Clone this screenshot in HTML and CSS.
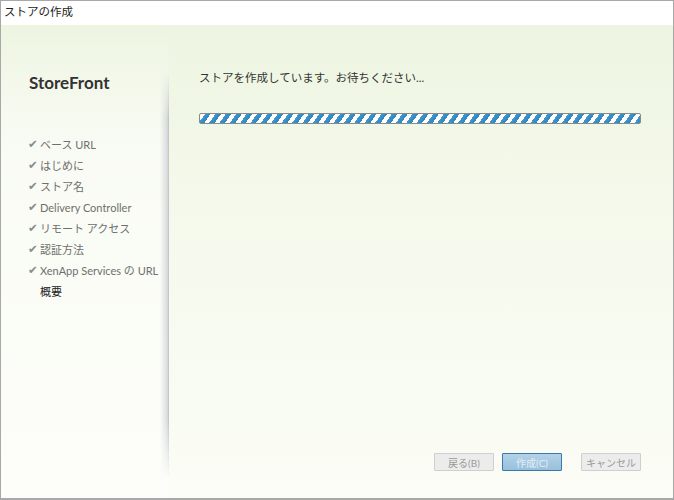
FILE: index.html
```html
<!DOCTYPE html>
<html lang="ja">
<head>
    <meta charset="UTF-8">
    <title>ストアの作成</title>
    <link rel="stylesheet" href="styles.css">
</head>
<body>
    <div class="window">
        <div class="title-bar">ストアの作成</div>
        <div class="wizard">
            <div class="sidebar">
                <h1 class="product">StoreFront</h1>
                <ul class="steps">
                    <li class="done">ベース URL</li>
                    <li class="done">はじめに</li>
                    <li class="done">ストア名</li>
                    <li class="done">Delivery Controller</li>
                    <li class="done">リモート アクセス</li>
                    <li class="done">認証方法</li>
                    <li class="done">XenApp Services の URL</li>
                    <li class="current">概要</li>
                </ul>
            </div>
            <div class="main">
                <p class="status">ストアを作成しています。お待ちください...</p>
                <div class="progress"></div>
                <div class="buttons">
                    <button class="btn" disabled>戻る(B)</button>
                    <button class="btn primary">作成(C)</button>
                    <button class="btn cancel" disabled>キャンセル</button>
                </div>
            </div>
        </div>
    </div>
</body>
</html>
```

FILE: styles.css
```css
body {
    margin: 0;
    font-family: Lato, "Noto Sans CJK JP", sans-serif;
    color: #333;
}
.window {
    width: 674px;
    height: 500px;
    box-sizing: border-box;
    border: 1px solid #a8a8a8;
    border-bottom-width: 2px;
    display: flex;
    flex-direction: column;
    background: #fff;
}
.title-bar {
    height: 24px;
    line-height: 22px;
    padding-left: 3px;
    font-size: 11.5px;
    color: #222;
    background: #fff;
}
.wizard {
    flex: 1;
    display: flex;
    background: linear-gradient(to bottom, #edf5e1 0%, #f5f9ec 40%, #fbfdf6 100%);
}
.sidebar {
    position: relative;
    width: 168px;
    padding: 47px 0 0 28px;
    box-sizing: border-box;
    background: linear-gradient(to bottom, rgba(255,255,255,0) 0%, rgba(255,255,255,0.5) 25%, rgba(255,255,255,0.4) 100%);
}
/* soft shadow that separates the step list from the page */
.sidebar::after {
    content: "";
    position: absolute;
    right: 0;
    top: 45px;
    bottom: 18px;
    width: 9px;
    background: linear-gradient(to right, rgba(190,195,205,0) 0%, rgba(190,195,205,0.55) 80%, rgba(170,175,185,0.8) 100%);
    -webkit-mask-image: linear-gradient(to bottom, transparent 0%, #000 12%, #000 85%, transparent 100%);
    mask-image: linear-gradient(to bottom, transparent 0%, #000 12%, #000 85%, transparent 100%);
}
.product {
    margin: 0;
    font-size: 17px;
    font-weight: 700;
    line-height: 22px;
    color: #333;
}
.steps {
    list-style: none;
    margin: 40px 0 0;
    padding: 0;
}
.steps li {
    font-size: 11px;
    line-height: 21px;
    color: #6f6f6f;
    padding-left: 11px;
    position: relative;
}
.steps li.done::before {
    content: "\2714";
    position: absolute;
    left: -1px;
    font-family: "DejaVu Sans", sans-serif;
    font-size: 11.5px;
    color: #8a8a8a;
}
.steps li.current {
    color: #222;
}
.main {
    flex: 1;
    padding: 45px 32px 0 30px;
    display: flex;
    flex-direction: column;
}
.status {
    margin: 0;
    font-size: 11.5px;
    line-height: 16px;
    color: #333;
}
.progress {
    margin-top: 27px;
    height: 9px;
    border: 1px solid #8a8a8a;
    border-radius: 2px;
    background: repeating-linear-gradient(-55deg, #2f86c0 0px, #4096cc 4.5px, #ffffff 4.5px, #ffffff 8.5px);
}
.buttons {
    margin-top: auto;
    margin-bottom: 27px;
    display: flex;
    justify-content: flex-end;
    gap: 8px;
}
.btn {
    width: 60px;
    height: 18px;
    padding: 0;
    font-family: inherit;
    font-size: 10px;
    color: #999;
    background: #ececec;
    border: 1px solid #cfcfcf;
    border-radius: 1px;
}
.btn.primary {
    color: #e4eef6;
    background: linear-gradient(to bottom, #b3d2e8, #98c0dd);
    border: 1px solid #3a78aa;
}
.btn.cancel {
    margin-left: 11px;
}
```
